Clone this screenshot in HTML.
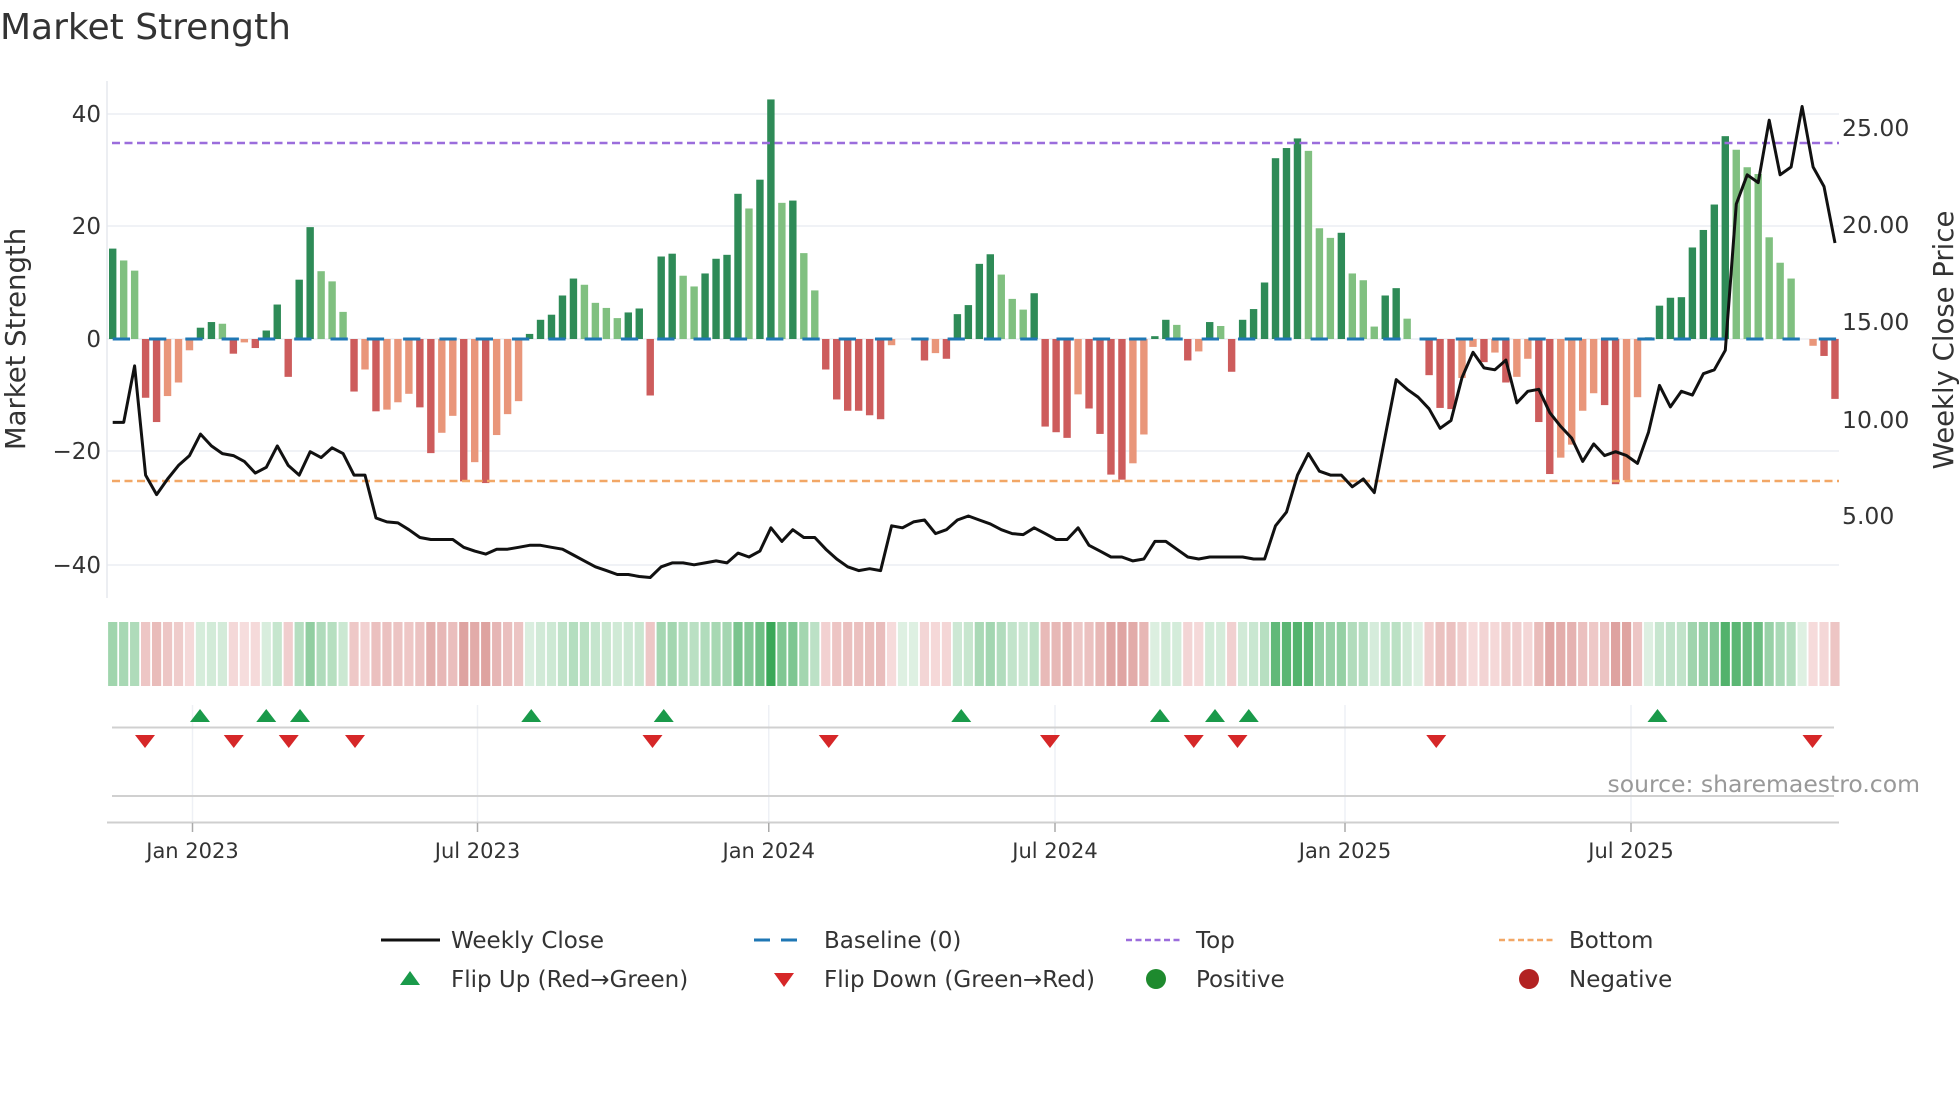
<!DOCTYPE html>
<html><head><meta charset="utf-8"><style>
html,body{margin:0;padding:0;background:#fff;}
svg{display:block;font-family:"DejaVu Sans","Liberation Sans",sans-serif;}
</style></head><body>
<svg id="c" width="1960" height="1102" viewBox="0 0 1960 1102" xmlns="http://www.w3.org/2000/svg">
<rect width="1960" height="1102" fill="#fff"/>
<text x="0" y="39" font-size="36" fill="#333">Market Strength</text>
<g stroke="#eceef3" stroke-width="1.5">
<line x1="107" y1="114" x2="1839" y2="114"/><line x1="107" y1="226" x2="1839" y2="226"/><line x1="107" y1="339" x2="1839" y2="339"/><line x1="107" y1="451" x2="1839" y2="451"/><line x1="107" y1="565" x2="1839" y2="565"/>
</g>
<line x1="107" y1="81" x2="107" y2="598" stroke="#e6e8ee" stroke-width="1.5"/>
<g font-size="23" fill="#333" text-anchor="end">
<text x="101" y="122">40</text><text x="101" y="234">20</text><text x="101" y="347">0</text><text x="101" y="459">−20</text><text x="101" y="573">−40</text>
</g>
<g font-size="23.5" fill="#333">
<text x="1842" y="136">25.00</text><text x="1842" y="233">20.00</text><text x="1842" y="330">15.00</text><text x="1842" y="428">10.00</text><text x="1842" y="524">5.00</text>
</g>
<text transform="translate(25,339) rotate(-90)" font-size="27.5" fill="#333" text-anchor="middle">Market Strength</text>
<text transform="translate(1953,340) rotate(-90)" font-size="27.5" fill="#333" text-anchor="middle">Weekly Close Price</text>
<g id="bars"></g>
<line x1="112.7" y1="339" x2="1839" y2="339" stroke="#1f77b4" stroke-width="3" stroke-dasharray="17.3 19"/>
<line x1="112" y1="143" x2="1839" y2="143" stroke="#9b6ddc" stroke-width="2.5" stroke-dasharray="8 4.5"/>
<line x1="112" y1="481" x2="1839" y2="481" stroke="#f2a766" stroke-width="2.5" stroke-dasharray="8 4.5"/>
<polyline id="price" fill="none" stroke="#111" stroke-width="3" stroke-linejoin="round"/>
<g id="strip"></g>
<g stroke="#eef0f5" stroke-width="1.5">
<line x1="192.5" y1="705" x2="192.5" y2="822"/><line x1="477.5" y1="705" x2="477.5" y2="822"/><line x1="768.75" y1="705" x2="768.75" y2="822"/><line x1="1055" y1="705" x2="1055" y2="822"/><line x1="1345" y1="705" x2="1345" y2="822"/><line x1="1631" y1="705" x2="1631" y2="822"/>
</g>
<line x1="112" y1="727.5" x2="1834" y2="727.5" stroke="#d0d0d0" stroke-width="2"/>
<line x1="112" y1="796" x2="1834" y2="796" stroke="#d0d0d0" stroke-width="2"/>
<line x1="107" y1="822.5" x2="1839" y2="822.5" stroke="#cfcfcf" stroke-width="2"/>
<g id="marks"></g>
<g stroke="#aaa" stroke-width="1.5">
<line x1="192.5" y1="823" x2="192.5" y2="832"/><line x1="477.5" y1="823" x2="477.5" y2="832"/><line x1="768.75" y1="823" x2="768.75" y2="832"/><line x1="1055" y1="823" x2="1055" y2="832"/><line x1="1345" y1="823" x2="1345" y2="832"/><line x1="1631" y1="823" x2="1631" y2="832"/>
</g>
<g font-size="21" fill="#333" text-anchor="middle">
<text x="192.5" y="858">Jan 2023</text><text x="477.5" y="858">Jul 2023</text><text x="768.75" y="858">Jan 2024</text><text x="1055" y="858">Jul 2024</text><text x="1345" y="858">Jan 2025</text><text x="1631" y="858">Jul 2025</text>
</g>
<text x="1920" y="792" font-size="23.5" fill="#999" text-anchor="end">source: sharemaestro.com</text>
<g font-size="23" fill="#333">
<line x1="381" y1="940" x2="440" y2="940" stroke="#111" stroke-width="3"/>
<text x="451" y="948">Weekly Close</text>
<line x1="754" y1="940" x2="806" y2="940" stroke="#1f77b4" stroke-width="3" stroke-dasharray="16 11"/>
<text x="824" y="948">Baseline (0)</text>
<line x1="1126" y1="940" x2="1181" y2="940" stroke="#9b6ddc" stroke-width="2.5" stroke-dasharray="6 3.5"/>
<text x="1196" y="948">Top</text>
<line x1="1499" y1="940" x2="1554" y2="940" stroke="#f2a766" stroke-width="2.5" stroke-dasharray="6 3.5"/>
<text x="1569" y="948">Bottom</text>
<polygon points="400,985 420,985 410,971" fill="#1a9a4a"/>
<text x="451" y="987">Flip Up (Red→Green)</text>
<polygon points="774,973 794,973 784,987" fill="#d62728"/>
<text x="824" y="987">Flip Down (Green→Red)</text>
<circle cx="1156" cy="979" r="10" fill="#1e8a2e"/>
<text x="1196" y="987">Positive</text>
<circle cx="1529" cy="979" r="10" fill="#b22222"/>
<text x="1569" y="987">Negative</text>
</g>
</svg>
<script>
var V=[16,13.9,12.1,-10.4,-14.7,-10.1,-7.7,-2,2,3,2.7,-2.6,-0.6,-1.6,1.5,6.1,-6.7,10.5,19.8,12,10.2,4.8,-9.3,-5.4,-12.8,-12.5,-11.2,-9.7,-12.1,-20.2,-16.6,-13.6,-25.2,-21.8,-25.5,-17,-13.3,-11,0.9,3.4,4.3,7.7,10.7,9.6,6.4,5.5,3.7,4.7,5.4,-10,14.6,15.1,11.2,9.3,11.6,14.2,14.9,25.7,23.1,28.2,42.4,24.1,24.5,15.2,8.6,-5.4,-10.7,-12.7,-12.7,-13.5,-14.2,-1.1,0,0,-3.8,-2.5,-3.5,4.4,6,13.3,15,11.4,7.1,5.2,8.1,-15.5,-16.5,-17.5,-9.8,-12.3,-16.8,-24,-24.9,-22,-16.9,0.5,3.4,2.5,-3.8,-2.2,3,2.3,-5.8,3.4,5.3,10,32,33.8,35.5,33.3,19.6,17.9,18.8,11.6,10.4,2.2,7.7,9,3.6,0,-6.4,-12.2,-12.4,-6.9,-1.4,-4.1,-2.4,-7.7,-6.7,-3.5,-14.7,-23.9,-21,-18.7,-12.7,-9.6,-11.7,-25.7,-25,-10.3,0.3,5.9,7.3,7.4,16.2,19.3,23.8,35.9,33.5,30.4,29.2,18,13.5,10.7,0,-1.2,-3,-10.6];
var F="DLLDDLLLDDLDLDDDDDDLLLDLDLLLDDLLDLDLLLDDDDDLLLLDDDDDLLDDDDLDDLDLLDDDDDDLDDDLDDDDDLLLDDDDLDDDDLLDDLDLDLDDDDDDDLLLDLLLDDLDDDDLLDLDLLDDLLLLDDLLDDDDDDDDLLLLLLDLDD";
var P=[9.9,9.9,12.8,7.2,6.2,7.0,7.7,8.2,9.3,8.7,8.3,8.2,7.9,7.3,7.6,8.7,7.7,7.2,8.4,8.1,8.6,8.3,7.2,7.2,5.0,4.8,4.75,4.4,4.0,3.9,3.9,3.9,3.5,3.3,3.15,3.4,3.4,3.5,3.6,3.6,3.5,
3.4,3.1,2.8,2.5,2.3,2.1,2.1,2.0,1.95,2.5,2.7,2.7,2.6,2.7,2.8,2.7,3.2,3.0,3.3,
4.5,3.8,4.4,4.0,4.0,3.4,2.9,2.5,2.3,2.4,2.3,
4.6,4.5,4.8,4.9,4.2,4.4,4.9,5.1,4.9,4.7,4.4,4.2,4.15,4.5,4.2,3.9,3.9,4.5,3.6,3.3,3.0,3.0,2.8,2.9,3.8,3.8,3.4,3.0,2.9,3.0,3.0,3.0,3.0,2.9,2.9,
4.6,5.3,7.2,8.3,7.4,7.2,7.2,6.6,7.0,6.3,9.2,12.1,11.6,11.2,10.6,9.6,10.0,12.2,13.5,
12.7,12.6,13.1,10.9,11.5,11.6,10.4,9.7,9.1,7.9,8.8,8.2,8.4,8.2,7.8,9.4,11.8,10.7,11.5,11.3,12.4,12.6,13.6,21.1,22.6,22.2,25.4,22.6,23.0,26.1,23.0,22.0,19.1];
var NS="http://www.w3.org/2000/svg",PITCH=10.97;
function el(t,a,p){var e=document.createElementNS(NS,t);for(var k in a)e.setAttribute(k,a[k]);p.appendChild(e);return e;}
var bars=document.getElementById('bars'),strip=document.getElementById('strip'),marks=document.getElementById('marks');
function mix(a,b,t){return 'rgb('+a.map(function(v,i){return Math.round(v+(b[i]-v)*t)}).join(',')+')';}
for(var i=0;i<V.length;i++){
 var cx=112.7+PITCH*i,v=V[i],d=F[i]=='D';
 if(v!==0){
  var h=Math.abs(v)*5.65,col=v>0?(d?'#2e8b57':'#80c080'):(d?'#cd5c5c':'#e9967a');
  el('rect',{x:cx-3.7,y:v>0?339-h:339,width:7.4,height:h,fill:col},bars);
 }
 var t=Math.min(1,Math.abs(v)/42);
 var c=v>=0?mix([222,240,226],[58,168,88],t):mix([247,222,222],[206,124,120],t);
 el('rect',{x:cx-4.6,y:622,width:9.2,height:64,fill:c},strip);
}
var pts=[];for(var i=0;i<P.length;i++){pts.push((112.7+PITCH*i).toFixed(1)+','+(323-(P[i]-15)*19.5).toFixed(1));}
document.getElementById('price').setAttribute('points',pts.join(' '));
[160,213,240,425,531,769,928,972,999,1326].forEach(function(x){x*=1.25;el('polygon',{points:(x-10)+',722 '+(x+10)+',722 '+x+',709',fill:'#1a9a4a'},marks);});
[116,187,231,284,522,663,840,955,990,1149,1450].forEach(function(x){x*=1.25;el('polygon',{points:(x-10)+',735 '+(x+10)+',735 '+x+',748',fill:'#d62728'},marks);});
</script>
</body></html>
